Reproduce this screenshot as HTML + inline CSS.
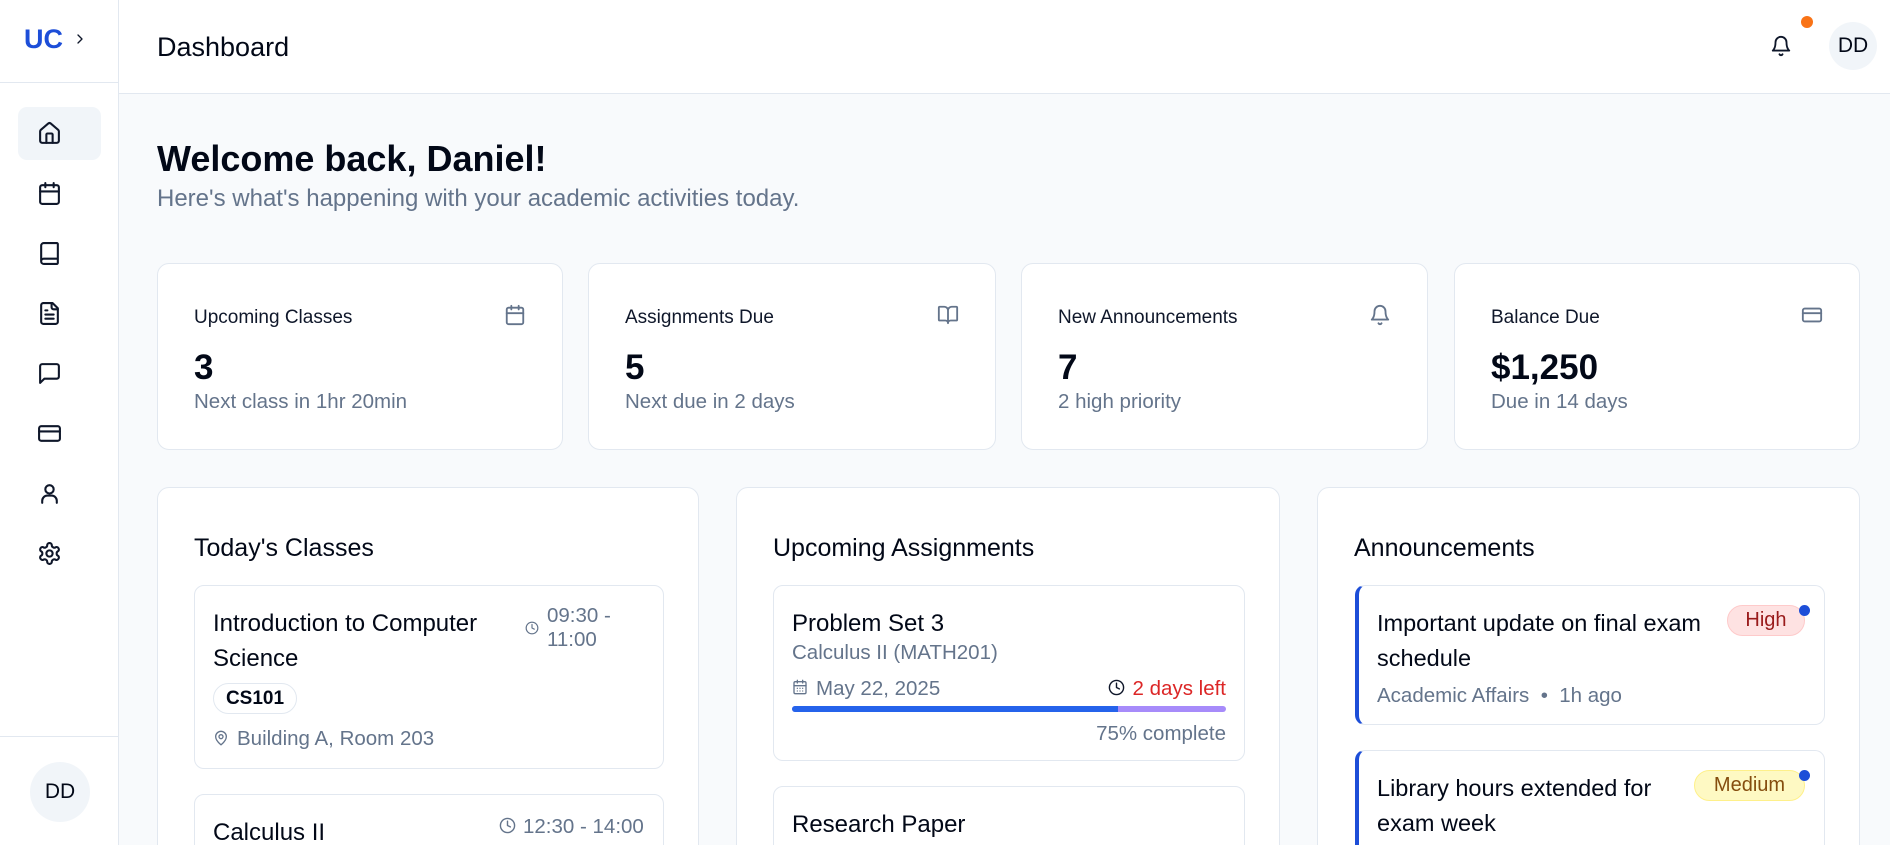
<!DOCTYPE html>
<html><head><meta charset="utf-8"><style>
*{box-sizing:border-box;margin:0;padding:0}
html,body{width:1890px;height:845px;overflow:hidden}
body{background:#f8fafc;font-family:"Liberation Sans",sans-serif;color:#020817;position:relative}
.abs{position:absolute}
.side{left:0;top:0;width:119px;height:845px;background:#fff;border-right:1px solid #e2e8f0}
.hdr{left:119px;top:0;right:0;height:94px;background:#fff;border-bottom:1px solid #e2e8f0}
svg{fill:none;stroke:currentColor;stroke-width:2;stroke-linecap:round;stroke-linejoin:round}
.nav svg{position:absolute;left:37px;width:25px;height:25px;color:#0f172a}
.card{background:#fff;border:1px solid #e2e8f0;border-radius:12px}
.st .t{position:absolute;left:36px;top:43px;font-size:19px;color:#0f172a}
.st .n{position:absolute;left:36px;top:84px;font-size:35px;font-weight:700}
.st .s{position:absolute;left:36px;top:126px;font-size:20.5px;color:#64748b}
.st svg{position:absolute;right:36px;top:40px;width:22px;height:22px;color:#64748b}
.h2{position:absolute;left:36px;top:46px;font-size:25px}
.item{position:absolute;background:#fff;border:1px solid #e2e8f0;border-radius:10px}
.ti{font-size:24px;line-height:35px;color:#020817}
.mu{color:#64748b;font-size:20.5px}
</style></head><body>
<div class="abs side">
 <div class="abs" style="left:24px;top:24px;font-size:27px;font-weight:700;color:#1d4ed8">UC</div>
 <svg class="abs" style="left:72px;top:31px;width:16px;height:16px;color:#0f172a" viewBox="0 0 24 24"><path d="m9 18 6-6-6-6"/></svg>
 <div class="abs" style="left:0;top:82px;width:118px;border-top:1px solid #e2e8f0"></div>
 <div class="abs" style="left:18px;top:107px;width:83px;height:53px;background:#f1f5f9;border-radius:9px"></div>
 <div class="nav">
  <svg style="top:121px" viewBox="0 0 24 24"><path d="M15 21v-8a1 1 0 0 0-1-1h-4a1 1 0 0 0-1 1v8"/><path d="M3 10a2 2 0 0 1 .709-1.528l7-5.999a2 2 0 0 1 2.582 0l7 5.999A2 2 0 0 1 21 10v9a2 2 0 0 1-2 2H5a2 2 0 0 1-2-2z"/></svg>
  <svg style="top:181px" viewBox="0 0 24 24"><path d="M8 2v4M16 2v4"/><rect x="3" y="4" width="18" height="18" rx="2"/><path d="M3 10h18"/></svg>
  <svg style="top:241px" viewBox="0 0 24 24"><path d="M4 19.5v-15A2.5 2.5 0 0 1 6.5 2H19a1 1 0 0 1 1 1v18a1 1 0 0 1-1 1H6.5a1 1 0 0 1 0-5H20"/></svg>
  <svg style="top:301px" viewBox="0 0 24 24"><path d="M15 2H6a2 2 0 0 0-2 2v16a2 2 0 0 0 2 2h12a2 2 0 0 0 2-2V7Z"/><path d="M14 2v4a2 2 0 0 0 2 2h4M10 9H8M16 13H8M16 17H8"/></svg>
  <svg style="top:361px" viewBox="0 0 24 24"><path d="M21 15a2 2 0 0 1-2 2H7l-4 4V5a2 2 0 0 1 2-2h14a2 2 0 0 1 2 2z"/></svg>
  <svg style="top:421px" viewBox="0 0 24 24"><rect x="2" y="5" width="20" height="14" rx="2"/><path d="M2 10h20"/></svg>
  <svg style="top:481px" viewBox="0 0 24 24"><circle cx="12" cy="8" r="4"/><path d="M5 21v-2a5 5 0 0 1 5-5h4a5 5 0 0 1 5 5v2"/></svg>
  <svg style="top:541px" viewBox="0 0 24 24"><path d="M12.22 2h-.44a2 2 0 0 0-2 2v.18a2 2 0 0 1-1 1.73l-.43.25a2 2 0 0 1-2 0l-.15-.08a2 2 0 0 0-2.73.73l-.22.38a2 2 0 0 0 .73 2.730l.15.1a2 2 0 0 1 1 1.72v.51a2 2 0 0 1-1 1.74l-.15.09a2 2 0 0 0-.73 2.73l.22.38a2 2 0 0 0 2.73.73l.15-.08a2 2 0 0 1 2 0l.43.25a2 2 0 0 1 1 1.73V20a2 2 0 0 0 2 2h.44a2 2 0 0 0 2-2v-.18a2 2 0 0 1 1-1.73l.43-.25a2 2 0 0 1 2 0l.15.08a2 2 0 0 0 2.73-.73l.22-.39a2 2 0 0 0-.73-2.73l-.15-.08a2 2 0 0 1-1-1.74v-.5a2 2 0 0 1 1-1.74l.15-.09a2 2 0 0 0 .73-2.73l-.22-.38a2 2 0 0 0-2.73-.73l-.15.08a2 2 0 0 1-2 0l-.43-.25a2 2 0 0 1-1-1.73V4a2 2 0 0 0-2-2z"/><circle cx="12" cy="12" r="3"/></svg>
 </div>
 <div class="abs" style="left:0;top:736px;width:118px;border-top:1px solid #e2e8f0"></div>
 <div class="abs" style="left:30px;top:762px;width:60px;height:60px;border-radius:50%;background:#f1f5f9;font-size:21px;line-height:60px;text-align:center">DD</div>
</div>
<div class="abs hdr">
 <div class="abs" style="left:38px;top:32px;font-size:27px">Dashboard</div>
 <svg class="abs" style="left:1651px;top:35px;width:22px;height:22px;color:#0f172a" viewBox="0 0 24 24"><path d="M6 8a6 6 0 0 1 12 0c0 7 3 9 3 9H3s3-2 3-9"/><path d="M10.3 21a1.94 1.94 0 0 0 3.4 0"/></svg>
 <div class="abs" style="left:1682px;top:16px;width:12px;height:12px;border-radius:50%;background:#f97316"></div>
 <div class="abs" style="left:1710px;top:22px;width:48px;height:48px;border-radius:50%;background:#f1f5f9;font-size:21px;line-height:48px;text-align:center">DD</div>
</div>
<div class="abs" style="left:157px;top:138px;font-size:36px;font-weight:700">Welcome back, Daniel!</div>
<div class="abs" style="left:157px;top:185px;font-size:24px;color:#64748b">Here's what's happening with your academic activities today.</div>

<div class="abs card st" style="left:157px;top:263px;width:406px;height:187px"><div class="t">Upcoming Classes</div><svg viewBox="0 0 24 24"><path d="M8 2v4M16 2v4"/><rect x="3" y="4" width="18" height="18" rx="2"/><path d="M3 10h18"/></svg><div class="n">3</div><div class="s">Next class in 1hr 20min</div></div>
<div class="abs card st" style="left:588px;top:263px;width:408px;height:187px"><div class="t">Assignments Due</div><svg viewBox="0 0 24 24"><path d="M12 7v14M3 18a1 1 0 0 1-1-1V4a1 1 0 0 1 1-1h5a4 4 0 0 1 4 4 4 4 0 0 1 4-4h5a1 1 0 0 1 1 1v13a1 1 0 0 1-1 1h-6a3 3 0 0 0-3 3 3 3 0 0 0-3-3z"/></svg><div class="n">5</div><div class="s">Next due in 2 days</div></div>
<div class="abs card st" style="left:1021px;top:263px;width:407px;height:187px"><div class="t">New Announcements</div><svg viewBox="0 0 24 24"><path d="M6 8a6 6 0 0 1 12 0c0 7 3 9 3 9H3s3-2 3-9"/><path d="M10.3 21a1.94 1.94 0 0 0 3.4 0"/></svg><div class="n">7</div><div class="s">2 high priority</div></div>
<div class="abs card st" style="left:1454px;top:263px;width:406px;height:187px"><div class="t">Balance Due</div><svg viewBox="0 0 24 24"><rect x="2" y="5" width="20" height="14" rx="2"/><path d="M2 10h20"/></svg><div class="n">$1,250</div><div class="s">Due in 14 days</div></div>

<div class="abs card" style="left:157px;top:487px;width:542px;height:400px;overflow:hidden">
 <div class="h2">Today's Classes</div>
 <div class="item" style="left:36px;top:97px;width:470px;height:184px">
  <div class="abs ti" style="left:18px;top:20px;width:310px">Introduction to Computer Science</div>
  <svg class="abs" style="left:330px;top:35px;width:14px;height:14px;color:#64748b" viewBox="0 0 24 24"><circle cx="12" cy="12" r="10"/><path d="M12 6v6l4 2"/></svg>
  <div class="abs mu" style="left:352px;top:18px;line-height:24px">09:30 -<br>11:00</div>
  <div class="abs" style="left:18px;top:97px;width:84px;height:31px;border:1px solid #e2e8f0;border-radius:16px;font-size:19px;font-weight:600;line-height:29px;text-align:center">CS101</div>
  <svg class="abs" style="left:18px;top:144px;width:16px;height:16px;color:#64748b" viewBox="0 0 24 24"><path d="M20 10c0 5-5.5 10.2-7.4 11.8a1 1 0 0 1-1.2 0C9.5 20.2 4 15 4 10a8 8 0 0 1 16 0"/><circle cx="12" cy="10" r="3"/></svg>
  <div class="abs mu" style="left:42px;top:141px">Building A, Room 203</div>
 </div>
 <div class="item" style="left:36px;top:306px;width:470px;height:184px">
  <div class="abs ti" style="left:18px;top:20px">Calculus II</div>
  <svg class="abs" style="left:304px;top:22px;width:17px;height:17px;color:#64748b" viewBox="0 0 24 24"><circle cx="12" cy="12" r="10"/><path d="M12 6v6l4 2"/></svg>
  <div class="abs mu" style="left:328px;top:20px">12:30 - 14:00</div>
 </div>
</div>

<div class="abs card" style="left:736px;top:487px;width:544px;height:400px;overflow:hidden">
 <div class="h2">Upcoming Assignments</div>
 <div class="item" style="left:36px;top:97px;width:472px;height:176px">
  <div class="abs ti" style="left:18px;top:20px">Problem Set 3</div>
  <div class="abs mu" style="left:18px;top:55px">Calculus II (MATH201)</div>
  <svg class="abs" style="left:18px;top:93px;width:16px;height:16px;color:#64748b" viewBox="0 0 24 24"><path d="M8 2v4M16 2v4"/><rect x="3" y="4" width="18" height="18" rx="2"/><path d="M3 10h18M8 14h.01M12 14h.01M16 14h.01M8 18h.01M12 18h.01M16 18h.01"/></svg>
  <div class="abs mu" style="left:42px;top:91px">May 22, 2025</div>
  <svg class="abs" style="left:334px;top:93px;width:17px;height:17px;color:#0f172a" viewBox="0 0 24 24"><circle cx="12" cy="12" r="10"/><path d="M12 6v6l4 2"/></svg>
  <div class="abs" style="right:18px;top:91px;font-size:20.5px;color:#dc2626">2 days left</div>
  <div class="abs" style="left:18px;top:120px;width:434px;height:6px;border-radius:3px;background:#a78bfa;overflow:hidden"><div style="width:75%;height:100%;background:#2563eb"></div></div>
  <div class="abs mu" style="right:18px;top:136px">75% complete</div>
 </div>
 <div class="item" style="left:36px;top:298px;width:472px;height:176px">
  <div class="abs ti" style="left:18px;top:20px">Research Paper</div>
 </div>
</div>

<div class="abs card" style="left:1317px;top:487px;width:543px;height:400px;overflow:hidden">
 <div class="h2">Announcements</div>
 <div class="item" style="left:37px;top:97px;width:470px;height:140px;border-left:4px solid #1d4ed8">
  <div class="abs ti" style="left:18px;top:20px;width:356px;font-size:23.5px">Important update on final exam schedule</div>
  <div class="abs" style="left:368px;top:19px;width:78px;height:31px;border-radius:16px;background:#fee2e2;border:1px solid #fecaca;color:#991b1b;font-size:20px;line-height:29px;text-align:center">High</div>
  <div class="abs" style="left:440px;top:19px;width:11px;height:11px;border-radius:50%;background:#1d4ed8"></div>
  <div class="abs mu" style="left:18px;top:98px">Academic Affairs &nbsp;•&nbsp; 1h ago</div>
 </div>
 <div class="item" style="left:37px;top:262px;width:470px;height:160px;border-left:4px solid #1d4ed8">
  <div class="abs ti" style="left:18px;top:20px;width:300px;font-size:23.5px">Library hours extended for exam week</div>
  <div class="abs" style="left:335px;top:19px;width:111px;height:31px;border-radius:16px;background:#fef9c3;border:1px solid #fef08a;color:#854d0e;font-size:20px;line-height:29px;text-align:center">Medium</div>
  <div class="abs" style="left:440px;top:19px;width:11px;height:11px;border-radius:50%;background:#1d4ed8"></div>
 </div>
</div>
</body></html>
